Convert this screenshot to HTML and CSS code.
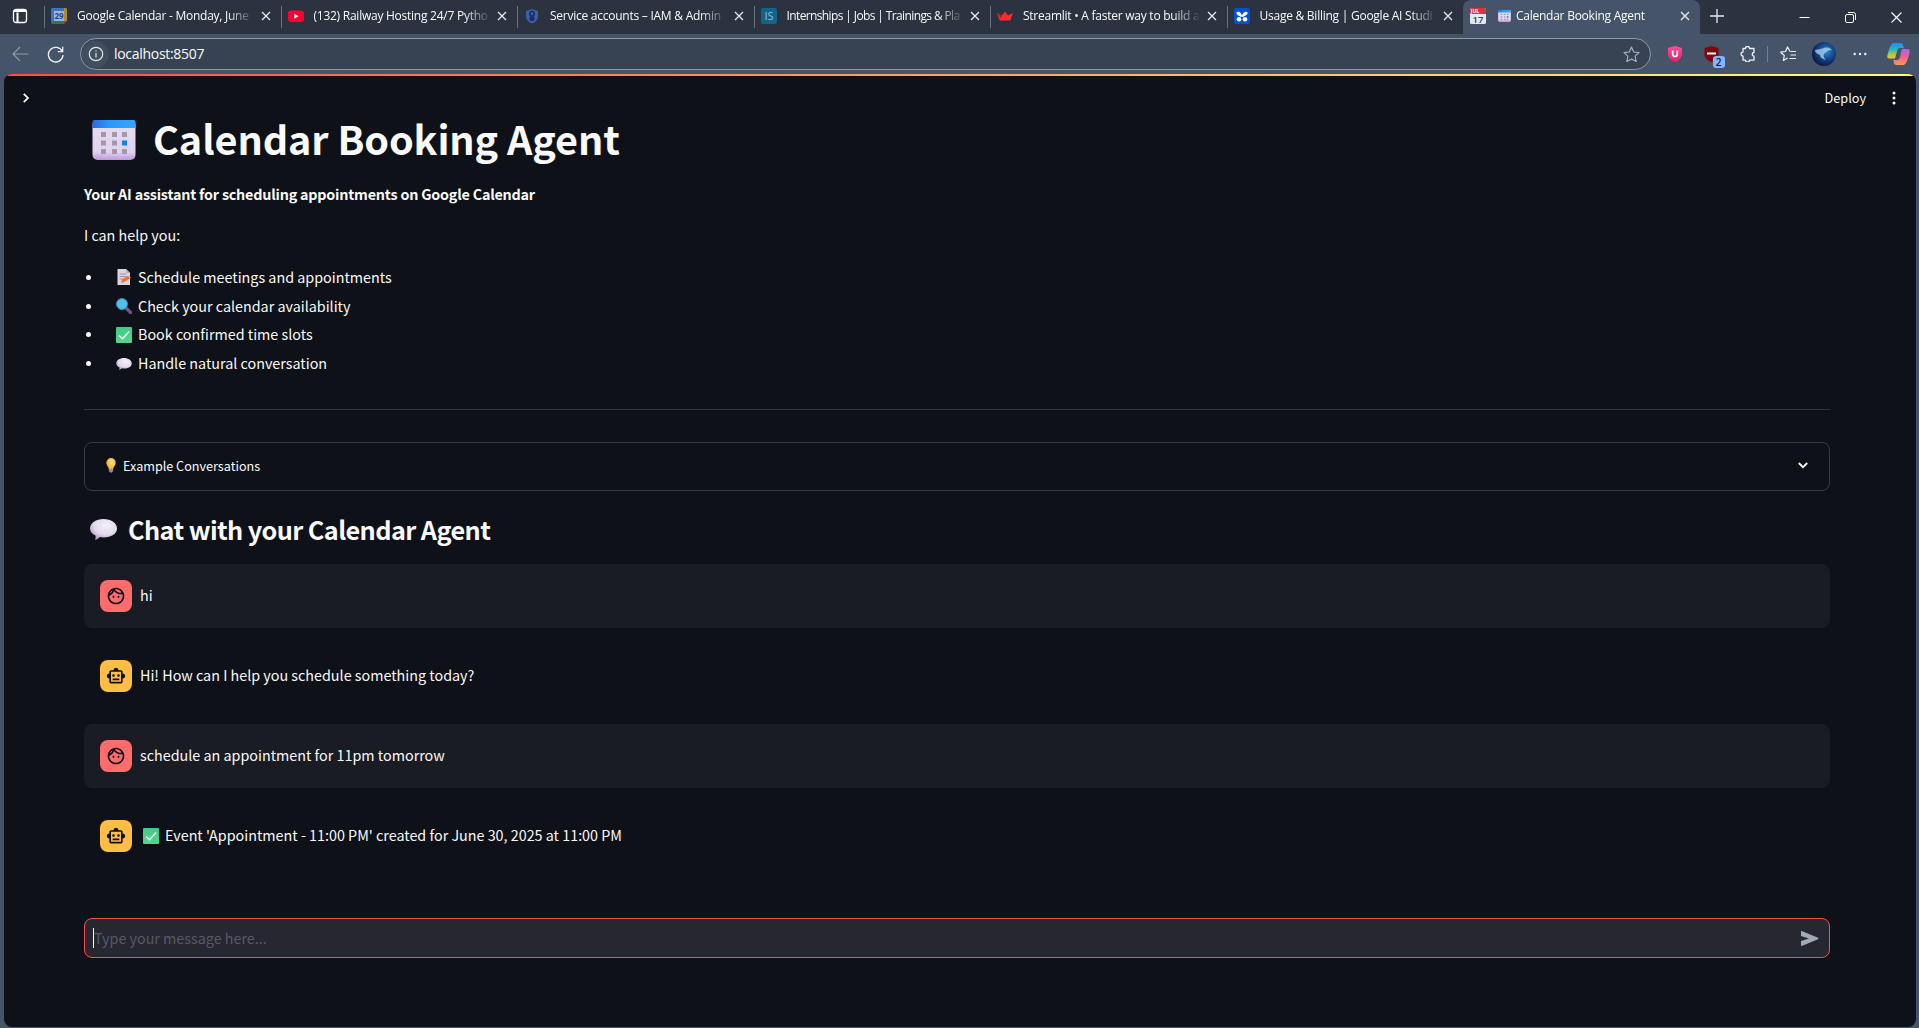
FILE: index.html
```html
<!DOCTYPE html>
<html lang="en">
<head>
<meta charset="utf-8">
<title>Calendar Booking Agent</title>
<link rel="stylesheet" href="styles.css">
</head>
<body>
<svg class="defs" width="0" height="0" aria-hidden="true">
  <defs>
    <linearGradient id="g-blue" x1="0" y1="0" x2="1" y2="0"><stop offset="0" stop-color="#3066e0"/><stop offset=".35" stop-color="#2b96fa"/><stop offset="1" stop-color="#35a8ff"/></linearGradient>
    <linearGradient id="g-paper" x1="0" y1="0" x2="0" y2="1"><stop offset="0" stop-color="#e6dcf0"/><stop offset=".8" stop-color="#e2d2ee"/><stop offset="1" stop-color="#bb98dc"/></linearGradient>
    <radialGradient id="g-bubble" cx=".6" cy=".3" r=".75"><stop offset="0" stop-color="#f5effa"/><stop offset=".6" stop-color="#e2d8ec"/><stop offset="1" stop-color="#a992c4"/></radialGradient>
    <radialGradient id="g-bulb" cx=".6" cy=".4" r=".6"><stop offset="0" stop-color="#ffe58a"/><stop offset="1" stop-color="#f0a92e"/></radialGradient>
    <linearGradient id="g-check" x1="0" y1="0" x2="0" y2="1"><stop offset="0" stop-color="#41c98a"/><stop offset="1" stop-color="#52d88c"/></linearGradient>
    <linearGradient id="g-cop1" x1="0" y1="0" x2="0" y2="1"><stop offset="0" stop-color="#1c8df5"/><stop offset=".45" stop-color="#2cb8c8"/><stop offset=".7" stop-color="#a8c43c"/><stop offset="1" stop-color="#f5c52d"/></linearGradient>
    <linearGradient id="g-cop2" x1="0" y1="0" x2="0" y2="1"><stop offset="0" stop-color="#a965f0"/><stop offset=".5" stop-color="#f0608e"/><stop offset="1" stop-color="#ff9a4d"/></linearGradient>
    <linearGradient id="g-pink" x1="0" y1="0" x2="0" y2="1"><stop offset="0" stop-color="#ff4f9a"/><stop offset="1" stop-color="#e0206c"/></linearGradient>
    <radialGradient id="g-avatar" cx=".6" cy=".4" r=".6"><stop offset="0" stop-color="#3b86c8"/><stop offset=".5" stop-color="#154a94"/><stop offset="1" stop-color="#0a1c44"/></radialGradient>
    <symbol id="calendar" viewBox="0 0 44 40">
      <rect x=".5" y="0" width="43" height="40" rx="5" fill="url(#g-paper)"/>
      <path d="M.5 8V2a2 2 0 0 1 2-2h39a2 2 0 0 1 2 2v6z" fill="url(#g-blue)"/>
      <g fill="#a298ac"><path d="M9 12h5v5H9zM20 12h5v5h-5zM30 12h5v5h-5zM9 20.500h5v5H9zM20 20.500h5v5h-5zM9 29h5v5H9zM20 29h5v5h-5zM30 29h5v5h-5z"/></g>
      <path d="M30 20.500h5v5h-5z" fill="#0a84ee"/>
    </symbol>
    <symbol id="bubble" viewBox="0 0 27 21">
      <path d="M13.500 0C21 0 27 4 27 9.500S21 18.500 14 18.500c-1.500 0-3-.1-4.200-.4C8.500 19.600 6.800 20.800 5 21c.6-1.600.8-3 .5-4.400C2 14.800 0 12.400 0 9.500 0 4 6 0 13.500 0z" fill="url(#g-bubble)"/>
    </symbol>
    <symbol id="check" viewBox="0 0 16 16">
      <rect width="16" height="16" rx="1" fill="url(#g-check)"/>
      <path d="M3 8.500l3.500 3.300 6.700-7.300" fill="none" stroke="#fff" stroke-width="1.500"/>
    </symbol>
    <symbol id="face" viewBox="0 0 24 24"><path d="M10.250 13c0 .69-.56 1.250-1.250 1.250S7.750 13.690 7.750 13s.56-1.250 1.250-1.250 1.250.56 1.250 1.250zM15 11.750c-.69 0-1.250.56-1.250 1.250s.56 1.250 1.250 1.250 1.250-.56 1.250-1.250-.56-1.250-1.250-1.250zm7 .25c0 5.520-4.480 10-10 10S2 17.520 2 12 6.480 2 12 2s10 4.480 10 10zM10.660 4.120C12.060 6.440 14.600 8 17.500 8c.46 0 .91-.05 1.340-.12C17.440 5.560 14.900 4 12 4c-.46 0-.91.05-1.340.12zM4.420 9.470a8.046 8.046 0 0 0 3.660-4.440 8.046 8.046 0 0 0-3.660 4.440zM20 12c0-.78-.12-1.530-.33-2.240-.7.15-1.420.24-2.170.24a10 10 0 0 1-7.760-3.690A10.016 10.016 0 0 1 4 11.860c.01.04 0 .09 0 .14 0 4.410 3.590 8 8 8s8-3.590 8-8z" fill="#0e1117"/></symbol>
    <symbol id="robot" viewBox="0 0 24 24"><path d="M20 9V7c0-1.100-.9-2-2-2h-3c0-1.660-1.340-3-3-3S9 3.340 9 5H6c-1.100 0-2 .9-2 2v2c-1.660 0-3 1.340-3 3s1.340 3 3 3v4c0 1.100.9 2 2 2h12c1.100 0 2-.9 2-2v-4c1.660 0 3-1.340 3-3s-1.340-3-3-3zm-2 10H6V7h12v12zm-9-6c-.83 0-1.500-.67-1.500-1.500S8.170 10 9 10s1.500.67 1.500 1.500S9.830 13 9 13zm7.500-1.500c0 .83-.67 1.500-1.500 1.500s-1.500-.67-1.500-1.500.67-1.500 1.500-1.500 1.500.67 1.500 1.500zM8 15h8v2H8v-2z" fill="#0e1117"/></symbol>
    <symbol id="close" viewBox="0 0 10 10"><path d="M1 1l8 8M9 1L1 9" stroke="#e9ecef" stroke-width="1.300" fill="none"/></symbol>
  </defs>
</svg>

<header class="tabstrip">
  <div class="workspace"><svg width="16" height="16" viewBox="0 0 16 16" fill="none" stroke="#fff" stroke-width="1.300"><rect x="1.500" y="1.500" width="13" height="13" rx="2.500"/><path d="M5.500 4.500v10M2 3h12" stroke-width="2"/></svg></div>
  <div class="tab">
    <svg class="fav" viewBox="0 0 16 16"><path d="M1 0h12v3H3v10H0V1z" fill="#3d73c4"/><path d="M13 0h2l1 1v12h-3z" fill="#b08a2c"/><path d="M0 13h13v3H1l-1-1z" fill="#2f7a46"/><path d="M13 16v-3h3z" fill="#a33a38"/><rect x="3" y="3" width="10" height="10" fill="#9fb4cc"/><text x="8" y="11" text-anchor="middle" font-size="8" font-weight="700" fill="#1c4a93">29</text></svg>
    <span class="tab-title">Google Calendar - Monday, June</span><svg class="x"><use href="#close"/></svg>
  </div>
  <div class="tab">
    <svg class="fav" viewBox="0 0 16 16"><rect y="2.500" width="16" height="11.500" rx="3" fill="#ff0033"/><path d="M6.300 5.800v5L10.500 8.300z" fill="#fff"/></svg>
    <span class="tab-title">(132) Railway Hosting 24/7 Pytho</span><svg class="x"><use href="#close"/></svg>
  </div>
  <div class="tab">
    <svg class="fav" viewBox="0 0 16 16"><path d="M8 1l6 2v5c0 3.500-2.500 6-6 7.500C4.500 14 2 11.500 2 8V3z" fill="#3c5db0"/><circle cx="8" cy="5.700" r="2.200" fill="none" stroke="#1d2f55" stroke-width="1.500"/><circle cx="8" cy="10.500" r="2.600" fill="#1d2f55"/></svg>
    <span class="tab-title">Service accounts – IAM &amp; Admin</span><svg class="x"><use href="#close"/></svg>
  </div>
  <div class="tab">
    <svg class="fav" viewBox="0 0 16 16"><rect width="16" height="16" rx="2" fill="#11658c"/><text x="8" y="12" text-anchor="middle" font-size="11" fill="#9cb8c6">IS</text></svg>
    <span class="tab-title tight">Internships | Jobs | Trainings &amp; Pla</span><svg class="x"><use href="#close"/></svg>
  </div>
  <div class="tab">
    <svg class="fav" viewBox="0 0 16 16"><path d="M0 5l5 2.500L8 3.500l3 4L16 5l-2.500 7q-.3.500-1 .5h-9q-.7 0-1-.5z" fill="#ff2b2b"/><path d="M4 10l-4-5 5 2.500z" fill="#8f2630"/></svg>
    <span class="tab-title">Streamlit • A faster way to build a</span><svg class="x"><use href="#close"/></svg>
  </div>
  <div class="tab">
    <svg class="fav" viewBox="0 0 16 16"><rect width="16" height="16" rx="2" fill="#0550d4"/><path d="M8 9C5 8 2 7 2.500 4.200 5 2.500 7.500 5 8 7.500 8.500 5 11 2.500 13.500 4.200 14 7 11 8 8 9z" fill="#fff"/><circle cx="5" cy="11.300" r="2.300" fill="#fff"/><circle cx="11" cy="11.300" r="2.300" fill="#fff"/></svg>
    <span class="tab-title">Usage &amp; Billing | Google AI Studi</span><svg class="x"><use href="#close"/></svg>
  </div>
  <div class="tab active">
    <svg class="fav" viewBox="0 0 16 16"><rect width="16" height="16" rx="1.500" fill="#e3e8ec"/><path d="M0 6V1.500Q0 0 1.500 0h13Q16 0 16 1.500V6z" fill="#d93540"/><text x="5" y="5" text-anchor="middle" font-size="5" font-weight="700" fill="#fff">JUL</text><text x="8" y="14.500" text-anchor="middle" font-size="9.500" font-weight="600" fill="#33424e">17</text></svg>
    <svg class="mini"><use href="#calendar"/></svg>
    <span class="tab-title">Calendar Booking Agent</span><svg class="x"><use href="#close"/></svg>
  </div>
  <div class="newtab"><svg width="14" height="14" viewBox="0 0 14 14" stroke="#e9ecef" stroke-width="1.300"><path d="M7 0v14M0 7h14"/></svg></div>
  <div class="winctl">
    <svg width="11" height="11" viewBox="0 0 11 11" stroke="#fff"><path d="M.5 5.500h10"/></svg>
    <svg width="11" height="11" viewBox="0 0 11 11" stroke="#fff" fill="none"><rect x=".5" y="2.500" width="8" height="8" rx="1.500"/><path d="M3 .5h5.500a2 2 0 0 1 2 2V8"/></svg>
    <svg width="11" height="11" viewBox="0 0 11 11" stroke="#fff" stroke-width="1.200"><path d="M.5.5l10 10M10.500.5l-10 10"/></svg>
  </div>
</header>

<nav class="toolbar">
  <div class="navbtns">
    <svg width="17" height="16" viewBox="0 0 17 16" fill="none" stroke="#8d99a8" stroke-width="1.200"><path d="M16.500 8H1M8 1L1 8l7 7"/></svg>
    <svg width="17" height="17" viewBox="0 0 17 17" fill="none" stroke="#eef1f4" stroke-width="1.300"><path d="M15.300 5.500A7.300 7.300 0 1 0 16 9M15.700 .8v4.900h-4.900"/></svg>
  </div>
  <div class="address">
    <div class="info"><svg width="16" height="16" viewBox="0 0 16 16" fill="none" stroke="#e3e7ec" stroke-width="1.200"><circle cx="8" cy="8" r="6.700"/><path d="M8 7v4.500M8 4.400v1.400"/></svg></div>
    <span class="url">localhost:8507</span>
    <svg width="17" height="17" viewBox="0 0 24 24" fill="none" stroke="#a9b3bf" stroke-width="1.600" stroke-linejoin="round"><path d="M12 1.500l3.200 6.900 7.400.9-5.500 5.100 1.500 7.500L12 18.200l-6.600 3.700 1.500-7.500L1.400 9.300l7.400-.9z"/></svg>
  </div>
  <div class="extensions">
    <svg width="14" height="16" viewBox="0 0 14 16"><path d="M7 0l7 2v6c0 4-3 6.500-7 8-4-1.500-7-4-7-8V2z" fill="url(#g-pink)"/><path d="M4.700 4.500v3.700a2.300 2.300 0 0 0 4.600 0V4.500" stroke="#fff" stroke-width="1.700" fill="none"/></svg>
    <div class="ublock"><svg width="15" height="16" viewBox="0 0 14 16"><path d="M7 0l7 2v6c0 4-3 6.500-7 8-4-1.500-7-4-7-8V2z" fill="#800610"/><path d="M2.500 7.500h9" stroke="#fff" stroke-width="2"/></svg><span class="badge">2</span></div>
    <svg width="15" height="16" viewBox="0 0 15 16" fill="none" stroke="#f1f3f5" stroke-width="1.300" stroke-linejoin="round"><path d="M3 2.500h2.500a2 2 0 0 1 4 0H14v4a1.800 1.800 0 1 0 0 3.600v4H9.500a2 2 0 0 1-4 0H3v-4a2 2 0 1 1 0-4z"/></svg>
    <i class="divider"></i>
    <svg width="17" height="16" viewBox="0 0 17 16" fill="none" stroke="#f1f3f5" stroke-width="1.200" stroke-linejoin="round"><path d="M10 5.500L7.500 1 5.500 5.500.7 6.200l3.600 3.300-.9 5L7.600 12M10.500 5.500H16M10.500 9H16M9.500 12.500H16"/></svg>
    <svg width="24" height="24" viewBox="0 0 24 24"><circle cx="12" cy="12" r="12" fill="url(#g-avatar)"/><path d="M3 8c4-1 7-1 9-2 4-1 6 0 8 2-4 0-6 2-8 4-1 2 0 4 2 6-4-1-6-3-6-5-2-1-5-2-5-5z" fill="#a9d8f0" opacity=".75"/></svg>
    <svg width="14" height="4" viewBox="0 0 14 4" fill="#f1f3f5"><circle cx="1.700" cy="2" r="1.200"/><circle cx="7" cy="2" r="1.200"/><circle cx="12.300" cy="2" r="1.200"/></svg>
    <svg width="23" height="22" viewBox="0 0 23 22"><path d="M7 0h6.500q2 0 2.500 2l.7 3H13q-2 0-2.600 2L8 15.500H2.500Q0 15.500.3 13C1 9 2.500 5 4 2Q5 0 7 0z" fill="url(#g-cop1)"/><path d="M16 22H9.500q-2 0-2.500-2l-.7-3H10q2 0 2.600-2L15 6h5.500q2.500 0 2.200 3C22 13 20.500 17 19 20q-1 2-3 2z" fill="url(#g-cop2)"/></svg>
  </div>
</nav>

<main class="page">
  <div class="decoration"></div>
  <div class="app-header">
    <svg width="6" height="10" viewBox="0 0 6 10" fill="none" stroke="#fafafa" stroke-width="1.800"><path d="M.8.8L5 5 .8 9.200"/></svg>
    <div class="app-actions"><span class="deploy">Deploy</span><svg width="4" height="14" viewBox="0 0 4 14" fill="#fafafa"><circle cx="2" cy="2" r="1.500"/><circle cx="2" cy="7" r="1.500"/><circle cx="2" cy="12" r="1.500"/></svg></div>
  </div>
  <div class="content">
    <h1><svg width="44" height="40"><use href="#calendar"/></svg><span>Calendar Booking Agent</span></h1>
    <p class="lead">Your AI assistant for scheduling appointments on Google Calendar</p>
    <p class="intro">I can help you:</p>
    <ul class="features">
      <li><svg viewBox="0 0 16 16"><path d="M1.500 0H10l4 4v12H1.500z" fill="#ddd5e6"/><path d="M10 0l4 4h-4z" fill="#b9adc6"/><path d="M3.500 5h7M3.500 7.500h7M3.500 10h4" stroke="#9b90a8"/><path d="M5 14l1-3.500 6.500-4 2.500 2.300L8.300 13z" fill="#f4702c"/><path d="M12 6.800l2 2" stroke="#b8d5ea" stroke-width="1"/></svg><span>Schedule meetings and appointments</span></li>
      <li><svg viewBox="0 0 16 16"><path d="M9.500 9.500l5 5" stroke="#7c4f87" stroke-width="3.200" stroke-linecap="round"/><circle cx="6" cy="6" r="5.500" fill="#4fc0ec" stroke="#3c86b8"/></svg><span>Check your calendar availability</span></li>
      <li><svg viewBox="0 0 16 16"><use href="#check"/></svg><span>Book confirmed time slots</span></li>
      <li><svg viewBox="0 0 16 16"><use href="#bubble" y="2" width="16" height="12"/></svg><span>Handle natural conversation</span></li>
    </ul>
    <hr>
    <section class="expander">
      <svg width="10" height="15" viewBox="0 0 10 15"><path d="M5 0a4.700 4.700 0 0 1 4.700 4.700C9.700 7.500 7.500 8.500 7.200 11H2.800C2.500 8.500.3 7.500.3 4.700A4.700 4.700 0 0 1 5 0z" fill="url(#g-bulb)"/><path d="M2.800 11h4.400v2L6 14.500H4L2.800 13z" fill="#9a84a8"/></svg>
      <span>Example Conversations</span>
      <svg width="10" height="7" viewBox="0 0 10 7" fill="none" stroke="#fafafa" stroke-width="1.800"><path d="M.8 1L5 5.200 9.200 1"/></svg>
    </section>
    <h3><svg width="27" height="21"><use href="#bubble"/></svg><span>Chat with your Calendar Agent</span></h3>
    <div class="chat">
      <div class="message user"><div class="avatar"><svg><use href="#face"/></svg></div><span>hi</span></div>
      <div class="message bot"><div class="avatar"><svg><use href="#robot"/></svg></div><span>Hi! How can I help you schedule something today?</span></div>
      <div class="message user"><div class="avatar"><svg><use href="#face"/></svg></div><span>schedule an appointment for 11pm tomorrow</span></div>
      <div class="message bot"><div class="avatar"><svg><use href="#robot"/></svg></div><svg class="emoji"><use href="#check"/></svg><span>Event 'Appointment - 11:00 PM' created for June 30, 2025 at 11:00 PM</span></div>
    </div>
    <div class="chat-input"><i class="caret"></i><span>Type your message here...</span><svg width="18" height="15" viewBox="0 0 18 15"><path d="M.8 0L17 6.800q1 .7 0 1.400L.8 15Q0 15 0 14.300V10l8-2.500L0 5V.7Q0 0 .8 0z" fill="#a3a8b8"/></svg></div>
  </div>
</main>
</body>
</html>
```
FILE: styles.css
```css
* { box-sizing: border-box; }
body {
  margin: 0;
  width: 1919px;
  height: 1028px;
  overflow: hidden;
  display: flex;
  flex-direction: column;
  background: #455469;
  color: #fafafa;
  font-family: "Noto Sans CJK SC", "Noto Sans", sans-serif;
}
svg { display: block; flex: none; }
.defs { position: absolute; }

/* Browser chrome */
.tabstrip {
  height: 34px;
  flex: none;
  display: flex;
  background: #2a333f;
  font: 12px/34px "Open Sans", "Noto Sans", sans-serif;
}
.workspace { width: 44px; padding: 8px 0 0 12px; }
.tab {
  width: 236.500px;
  height: 34px;
  flex: none;
  display: flex;
  align-items: center;
  padding: 0 10px 2px 6px;
  border-left: 1px solid transparent;
  border-image: linear-gradient(transparent 7px, #69737f 7px, #69737f 27px, transparent 27px) 1;
}
.fav { width: 16px; height: 16px; font-family: "Open Sans", sans-serif; }
.tab-title {
  width: 177px;
  margin-left: 10px;
  overflow: hidden;
  white-space: nowrap;
  line-height: 32px;
  letter-spacing: -.25px;
  -webkit-mask-image: linear-gradient(90deg, #000 150px, transparent 178px);
  mask-image: linear-gradient(90deg, #000 150px, transparent 178px);
}
.tab-title.tight { letter-spacing: -.62px; }
.x { width: 10px; height: 10px; margin-left: auto; }
.tab.active { background: #455469; border-image: none; border-radius: 8px 8px 0 0; }
.mini { width: 13px; height: 12px; margin-left: 12px; }
.active .tab-title { width: 150px; margin-left: 5px; }
.newtab { padding: 9px 0 0 10px; }
.winctl { margin-left: auto; display: flex; gap: 35px; padding: 12px 17px 0 0; }

.toolbar { height: 40px; flex: none; display: flex; align-items: center; }
.navbtns { width: 80px; display: flex; align-items: center; gap: 18px; padding-left: 12px; }
.address {
  width: 1571px;
  height: 32px;
  display: flex;
  align-items: center;
  padding: 0 10px 0 1px;
  border: 1px solid #8c99a7;
  border-radius: 16px;
  background: #374353;
}
.info { width: 27px; height: 27px; border-radius: 50%; background: #414e5e; display: grid; place-items: center; }
.url { flex: 1; margin-left: 5px; font: 14px/30px "Open Sans", sans-serif; letter-spacing: -.3px; }
.extensions {
  display: grid;
  grid-template-columns: repeat(3, 36px) 5px repeat(3, 36px) 40px;
  place-items: center;
  padding-left: 6px;
}
.ublock { position: relative; }
.badge {
  position: absolute;
  left: 9px;
  top: 10px;
  width: 12px;
  height: 12px;
  border-radius: 3px;
  background: #84b4ff;
  color: #111b2c;
  font: 600 10px/12px "Open Sans", sans-serif;
  text-align: center;
}
.divider { width: 1px; height: 16px; background: #708095; }

/* Application */
.page {
  width: 1912px;
  height: 953px;
  margin-left: 4px;
  border-radius: 8px;
  overflow: hidden;
  background: #0e1117;
}
.decoration { height: 2px; background: linear-gradient(90deg, #ff4b4b, #fffd80); }
.app-header { height: 44px; display: flex; align-items: center; justify-content: space-between; padding: 0 20px 0 19px; }
.app-actions { display: flex; align-items: center; gap: 26px; }
.deploy { font-size: 12.700px; line-height: 20px; }
.content { margin: 0 85px 0 80px; width: 1746px; }
h1, h3, p, ul { margin: 0; padding: 0; }
h1 { height: 40px; display: flex; align-items: center; padding-left: 8px; font-size: 39.600px; line-height: 40px; font-weight: 700; letter-spacing: -.1px; }
h1 span { margin-left: 17px; padding-bottom: 5px; }
p { font-size: 14.330px; line-height: 24px; white-space: nowrap; }
.lead { font-weight: 700; margin-top: 22px; letter-spacing: -.2px; }
.intro { margin-top: 17px; }
.features { list-style: none; margin-top: 16px; }
.features li { height: 28.800px; display: flex; align-items: center; font-size: 14.330px; white-space: nowrap; }
.features li::before { content: ""; width: 5px; height: 5px; border-radius: 50%; background: #fafafa; margin: 0 25px 0 2px; }
.features svg { width: 16px; height: 16px; margin-right: 6px; }
.features span { padding-bottom: 2px; }
hr { height: 1px; border: 0; background: #31363f; margin: 31px 0 32px; }
.expander { height: 49px; display: flex; align-items: center; border: 1px solid #363c45; border-radius: 8px; padding: 0 21px 2px 21px; font-size: 12.620px; }
.expander span { margin-left: 7px; flex: 1; }
h3 { height: 40px; display: flex; align-items: center; padding-left: 6px; margin-top: 18px; font-size: 25.300px; line-height: 40px; font-weight: 700; letter-spacing: -.6px; white-space: nowrap; }
h3 span { margin-left: 11px; }
.chat { display: grid; gap: 16px; margin-top: 15px; }
.message { height: 64px; display: flex; align-items: center; padding: 0 16px; border-radius: 8px; font-size: 14.330px; white-space: nowrap; }
.message span { padding-bottom: 3px; }
.message.user { background: #1a1c24; }
.avatar { width: 32px; height: 32px; margin-right: 8px; border-radius: 8px; display: grid; place-items: center; background: #ff6c6c; }
.bot .avatar { background: #ffbd45; }
.avatar svg { width: 20px; height: 20px; }
.emoji { width: 16px; height: 16px; margin: 0 6px 0 3px; }
.chat-input { height: 40px; display: flex; align-items: center; margin-top: 50px; padding: 0 10px 0 8px; border: 1px solid #ff4b4b; border-radius: 8px; background: #262730; color: #565a67; font-size: 14.330px; }
.caret { width: 1px; height: 20px; background: #fff; }
.chat-input span { flex: 1; padding-bottom: 1px; }
```
